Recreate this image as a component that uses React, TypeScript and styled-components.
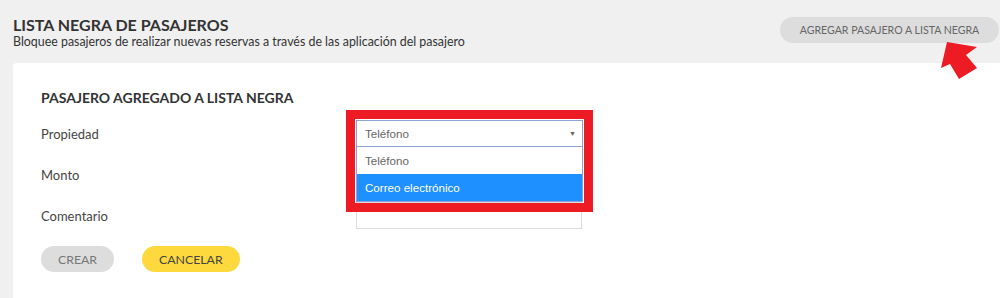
import React from 'react'
import styled, { createGlobalStyle } from 'styled-components'

const GlobalStyle = createGlobalStyle`
  html, body {
    margin: 0;
    padding: 0;
    background: #f0f0f0;
    font-family: Lato, 'Open Sans', sans-serif;
    color: #333;
  }
`

const App: React.FC<{}> = () => {
  const fields = ['Propiedad', 'Monto', 'Comentario']

  return (
    <>
      <GlobalStyle />
      <Page>
        <Header>
          <div>
            <Title>LISTA NEGRA DE PASAJEROS</Title>
            <Subtitle>Bloquee pasajeros de realizar nuevas reservas a través de las aplicación del pasajero</Subtitle>
          </div>
          <AddButton>AGREGAR PASAJERO A LISTA NEGRA</AddButton>
          <Arrow width='44' height='42' viewBox='0 0 44 42'>
            <polygon points='7,0 37,5 26,13 37,26 19,37 10,22 1,26' fill='#ed1c24' />
          </Arrow>
        </Header>

        <Card>
          <CardTitle>PASAJERO AGREGADO A LISTA NEGRA</CardTitle>
          <Form>
            {fields.map((name, i) => (
              <Row key={name}>
                <Label>{name}</Label>
                {i === 0 ? (
                  <SelectWrap>
                    <Select>
                      <span>Teléfono</span>
                      <Caret>▼</Caret>
                    </Select>
                    <Options>
                      <Option>Teléfono</Option>
                      <Option active>Correo electrónico</Option>
                    </Options>
                    <Highlight />
                  </SelectWrap>
                ) : (
                  <Input />
                )}
              </Row>
            ))}
          </Form>
          <Actions>
            <PillButton variant='gray'>CREAR</PillButton>
            <PillButton variant='yellow'>CANCELAR</PillButton>
          </Actions>
        </Card>
      </Page>
    </>
  )
}

const Page = styled.div`
  width: 1000px;
  height: 298px;
  overflow: hidden;
`

const Header = styled.div`
  position: relative;
  display: flex;
  justify-content: space-between;
  align-items: flex-start;
  padding: 16px 1px 0 13px;
  height: 47px;
`

const Title = styled.h1`
  margin: 0;
  font-size: 16px;
  line-height: 18px;
  font-weight: 700;
  color: #333;
`

const Subtitle = styled.p`
  margin: 0;
  font-size: 12.4px;
  line-height: 16px;
  color: #333;
`

const AddButton = styled.button`
  margin-top: 1px;
  width: 219px;
  height: 26px;
  border: none;
  border-radius: 13px;
  background: #dddddd;
  color: #666;
  font-family: Lato, sans-serif;
  font-size: 10.6px;
  padding: 0;
`

const Arrow = styled.svg`
  position: absolute;
  left: 940px;
  top: 42px;
`

const Card = styled.div`
  margin-left: 13px;
  background: #fff;
  border-top-left-radius: 4px;
  padding: 26px 28px 40px;
  height: 300px;
`

const CardTitle = styled.h2`
  margin: 0;
  font-size: 14px;
  line-height: 17px;
  font-weight: 700;
  color: #333;
`

const Form = styled.div`
  display: flex;
  flex-direction: column;
  gap: 14px;
  margin-top: 14px;
`

const Row = styled.div`
  display: flex;
  align-items: center;
  height: 27px;
`

const Label = styled.div`
  width: 315px;
  font-size: 13px;
  color: #444;
`

const Input = styled.div`
  width: 224px;
  height: 25px;
  border: 1px solid #ddd;
`

const SelectWrap = styled.div`
  position: relative;
  width: 227px;
  height: 27px;
`

const Select = styled.div`
  box-sizing: border-box;
  display: flex;
  align-items: center;
  justify-content: space-between;
  height: 27px;
  padding: 0 6px 0 8px;
  border: 1px solid #8fa3d6;
  background: #fff;
  font-family: 'Liberation Sans', Arial, sans-serif;
  font-size: 11.6px;
  color: #666;
`

const Caret = styled.span`
  font-size: 7px;
  color: #666;
`

const Options = styled.div`
  position: absolute;
  z-index: 2;
  left: 0;
  top: 27px;
  width: 227px;
  box-sizing: border-box;
  border: 1px solid #8fa3d6;
  border-top: none;
  background: #fff;
`

const Option = styled.div<{ active?: boolean }>`
  height: 27px;
  display: flex;
  align-items: center;
  padding-left: 8px;
  font-family: 'Liberation Sans', Arial, sans-serif;
  font-size: 11.6px;
  color: ${(p) => (p.active ? '#fff' : '#666')};
  background: ${(p) => (p.active ? '#1e90ff' : '#fff')};
`

const Highlight = styled.div`
  position: absolute;
  z-index: 3;
  left: -10px;
  top: -10px;
  width: 229px;
  height: 84px;
  border: 9px solid #ed1c24;
`

const Actions = styled.div`
  display: flex;
  gap: 28px;
  margin-top: 17px;
`

const PillButton = styled.button<{ variant: 'gray' | 'yellow' }>`
  height: 26px;
  padding: 0 17px;
  border: none;
  border-radius: 13px;
  font-family: Lato, sans-serif;
  font-size: 12.3px;
  background: ${(p) => (p.variant === 'yellow' ? '#fdd93d' : '#dddddd')};
  color: ${(p) => (p.variant === 'yellow' ? '#444' : '#777')};
`

export default App
